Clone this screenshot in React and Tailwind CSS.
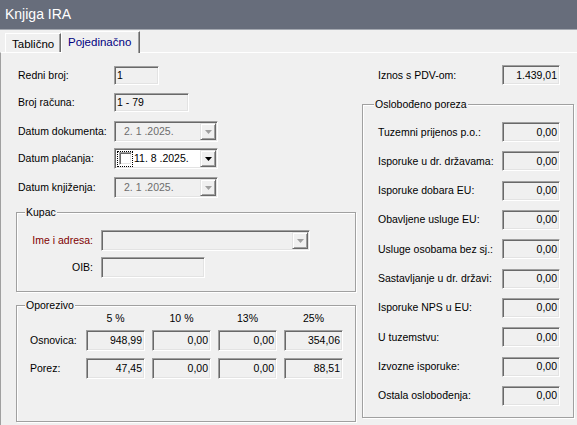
import React from 'react';

// classic Win32 sunken edit box and raised button edges
const sunken =
  'border border-t-[#a0a0a0] border-l-[#a0a0a0] border-r-white border-b-white shadow-[inset_1px_1px_0_#696969,inset_-1px_-1px_0_#e3e3e3]';
const raised =
  'border border-t-[#e3e3e3] border-l-[#e3e3e3] border-r-[#696969] border-b-[#696969] shadow-[inset_1px_1px_0_#ffffff,inset_-1px_-1px_0_#a0a0a0]';
const etched = 'border border-[#a0a0a0] shadow-[inset_1px_1px_0_#ffffff,1px_1px_0_#ffffff]';

function Field({ className = '', left = false, children }) {
  return (
    <div
      className={`${sunken} bg-[#f0f0f0] flex items-center shrink-0 text-black ${
        left ? 'justify-start pl-[2px]' : 'justify-end pr-[2px]'
      } ${className}`}
    >
      {children}
    </div>
  );
}

function Arrow({ disabled }) {
  return (
    <svg width="7" height="4" viewBox="0 0 7 4">
      <path d="M0 0h7L3.5 4z" fill={disabled ? '#a0a0a0' : '#000000'} />
    </svg>
  );
}

function Combo({ className = '', disabled = true, children }) {
  return (
    <div className={`${sunken} ${disabled ? 'bg-[#f0f0f0]' : 'bg-white'} flex p-[1px] shrink-0 ${className}`}>
      <div className="flex-1 flex items-center min-w-0">{children}</div>
      <div className={`${raised} w-[16px] bg-[#f0f0f0] flex items-center justify-center`}>
        <Arrow disabled={disabled} />
      </div>
    </div>
  );
}

function Row({ className = '', label, children }) {
  return (
    <div className={`flex items-center ${className}`}>
      <div className="ml-[2px] w-[96px] shrink-0">{label}</div>
      {children}
    </div>
  );
}

const exempt = [
  'Tuzemni prijenos p.o.:',
  'Isporuke u dr. državama:',
  'Isporuke dobara EU:',
  'Obavljene usluge EU:',
  'Usluge osobama bez sj.:',
  'Sastavljanje u dr. državi:',
  'Isporuke NPS u EU:',
  'U tuzemstvu:',
  'Izvozne isporuke:',
  'Ostala oslobođenja:',
];

const rates = ['5 %', '10 %', '13%', '25%'];
const osnovica = ['948,99', '0,00', '0,00', '354,06'];
const porez = ['47,45', '0,00', '0,00', '88,51'];

export default function App() {
  return (
    <div className="w-[577px] h-[425px] overflow-hidden bg-[#f0f0f0] flex flex-col font-['Liberation_Sans',Arial,sans-serif] text-[10.5px] leading-[13px] text-black">
      {/* title bar */}
      <div className="h-[29px] shrink-0 bg-[#676d7b] flex items-center pl-[5px] text-[14px] text-white">
        Knjiga IRA
      </div>
      <div className="h-px shrink-0 bg-[#a4a8b0]" />

      {/* tabs */}
      <div className="h-[22px] shrink-0 flex items-end pl-[5px] text-[11.5px]">
        <div className="h-[19px] w-[56px] border-t border-l border-white border-r border-r-[#696969] shadow-[inset_-1px_0_0_#a0a0a0] pl-[6px] pt-[3px] leading-[14px]">
          Tablično
        </div>
        <div className="relative z-10 -mb-px h-[22px] w-[79px] bg-[#f0f0f0] border-t border-l border-white border-r border-r-[#696969] shadow-[inset_-1px_0_0_#a0a0a0] pl-[6px] pt-[3px] leading-[14px] text-[#000080]">
          Pojedinačno
        </div>
      </div>

      {/* tab page */}
      <div className="flex-1 flex border-t border-t-white border-l border-l-[#a0a0a0]">
        {/* left column */}
        <div className="w-[355px] shrink-0 pl-[15px] flex flex-col">
          <Row className="mt-[13px]" label="Redni broj:">
            <Field className="w-[45px] h-[19px]" left>1</Field>
          </Row>
          <Row className="mt-[8px]" label="Broj računa:">
            <Field className="w-[75px] h-[19px]" left>1 - 79</Field>
          </Row>
          <Row className="mt-[9px]" label="Datum dokumenta:">
            <Combo className="w-[104px] h-[21px]">
              <span className="pl-[8px] text-[#6d6d6d]">2. 1 .2025.</span>
            </Combo>
          </Row>
          <Row className="mt-[6px]" label="Datum plaćanja:">
            <Combo className="w-[104px] h-[21px]" disabled={false}>
              <div className="ml-[1px] w-[16px] h-[16px] border border-dotted border-black flex items-center justify-center">
                <div className={`${sunken} w-[13px] h-[13px] bg-white`} />
              </div>
              <span className="pl-[1px]">11. 8 .2025.</span>
            </Combo>
          </Row>
          <Row className="mt-[8px]" label="Datum knjiženja:">
            <Combo className="w-[104px] h-[21px]">
              <span className="pl-[8px] text-[#6d6d6d]">2. 1 .2025.</span>
            </Combo>
          </Row>

          {/* Kupac */}
          <fieldset className={`${etched} mt-[8px] h-[86px] w-[340px]`}>
            <legend className="ml-[8px] px-[1px] leading-[13px] bg-[#f0f0f0]">Kupac</legend>
            <div className="mt-[11px] flex items-center">
              <div className="w-[76px] text-right text-[#800000]">Ime i adresa:</div>
              <Combo className="ml-[8px] w-[209px] h-[21px]" />
            </div>
            <div className="mt-[6px] flex items-center">
              <div className="w-[76px] text-right">OIB:</div>
              <Field className="ml-[8px] w-[104px] h-[21px]" />
            </div>
          </fieldset>

          {/* Oporezivo */}
          <fieldset className={`${etched} mt-[7px] h-[123px] w-[340px]`}>
            <legend className="ml-[8px] px-[1px] leading-[13px] bg-[#f0f0f0]">Oporezivo</legend>
            <div className="flex h-[13px]">
              <div className="w-[69px] shrink-0" />
              <div className="flex gap-[7px]">
                {rates.map((r) => (
                  <div key={r} className="w-[59px] text-center">{r}</div>
                ))}
              </div>
            </div>
            <div className="mt-[5px] flex items-center">
              <div className="w-[69px] shrink-0 pl-[13px]">Osnovica:</div>
              <div className="flex gap-[7px]">
                {osnovica.map((v, i) => (
                  <Field key={i} className="w-[59px] h-[21px]">{v}</Field>
                ))}
              </div>
            </div>
            <div className="mt-[7px] flex items-center">
              <div className="w-[69px] shrink-0 pl-[13px]">Porez:</div>
              <div className="flex gap-[7px]">
                {porez.map((v, i) => (
                  <Field key={i} className="w-[59px] h-[21px]">{v}</Field>
                ))}
              </div>
            </div>
          </fieldset>
        </div>

        {/* right column */}
        <div className="ml-[6px] w-[212px] shrink-0 flex flex-col">
          <div className="mt-[12px] flex items-center">
            <div className="w-[140px] shrink-0 pl-[16px]">Iznos s PDV-om:</div>
            <Field className="w-[58px] h-[20px]">1.439,01</Field>
          </div>

          <fieldset className={`${etched} mt-[13px] h-[320px] w-[212px]`}>
            <legend className="ml-[11px] px-[1px] leading-[13px] bg-[#f0f0f0]">Oslobođeno poreza</legend>
            <div className="mt-[11px] flex flex-col gap-[9.33px]">
              {exempt.map((label) => (
                <div key={label} className="flex items-center">
                  <div className="w-[139px] shrink-0 pl-[15px]">{label}</div>
                  <Field className="w-[58px] h-[20px]">0,00</Field>
                </div>
              ))}
            </div>
          </fieldset>
        </div>
      </div>
    </div>
  );
}
